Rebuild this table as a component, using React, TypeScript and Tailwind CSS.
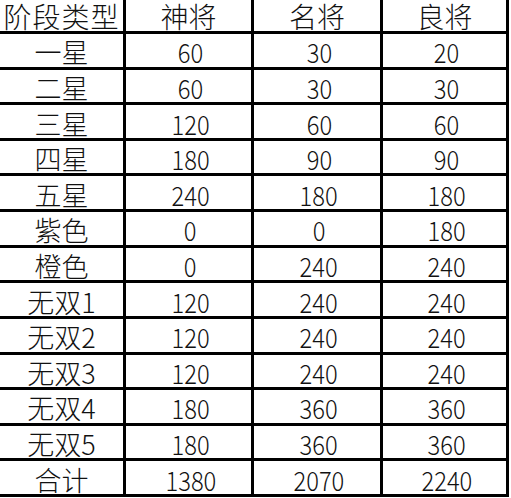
const header = ["阶段类型", "神将", "名将", "良将"];

const rows: [string, number, number, number][] = [
  ["一星", 60, 30, 20],
  ["二星", 60, 30, 30],
  ["三星", 120, 60, 60],
  ["四星", 180, 90, 90],
  ["五星", 240, 180, 180],
  ["紫色", 0, 0, 180],
  ["橙色", 0, 240, 240],
  ["无双1", 120, 240, 240],
  ["无双2", 120, 240, 240],
  ["无双3", 120, 240, 240],
  ["无双4", 180, 360, 360],
  ["无双5", 180, 360, 360],
  ["合计", 1380, 2070, 2240],
];

export default function App() {
  return (
    <div className="w-[511px] h-[498px] bg-white overflow-hidden">
      <div
        className="grid w-[509px] h-[497px] bg-black gap-[3px] pr-[3px] pb-[3px] grid-cols-[123px_125px_126px_123px] grid-rows-[31px_repeat(13,1fr)] text-[#111] leading-none font-light"
        style={{ fontFamily: '"Noto Sans CJK SC", "Noto Sans", sans-serif' }}
      >
        {header.map((h, i) => (
          <div
            key={h}
            className={
              "bg-white flex justify-center items-end pb-[1px] text-[28px] " +
              (i === 0 ? "tracking-[1px]" : "")
            }
          >
            {h}
          </div>
        ))}
        {rows.map((r) =>
          r.map((c, j) => (
            <div
              key={r[0] + "-" + j}
              className="bg-white flex justify-center items-center pt-[3px] text-[27px]"
            >
              {j === 0 ? (
                c
              ) : (
                <span className="inline-block scale-x-[0.88] translate-x-[2px]">{c}</span>
              )}
            </div>
          ))
        )}
      </div>
    </div>
  );
}
